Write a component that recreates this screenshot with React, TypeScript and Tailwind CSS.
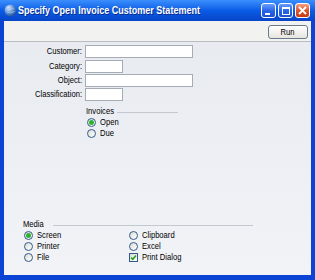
import React from 'react';

const FONT = { fontFamily: '"Liberation Sans", Arial, sans-serif' };

const Radio: React.FC<{ checked?: boolean }> = ({ checked }) => (
  <span className="relative inline-flex h-[9px] w-[9px] shrink-0 items-center justify-center rounded-full border border-[#33598c] bg-gradient-to-br from-[#dcdcd5] to-white">
    {checked && <span className="h-[5px] w-[5px] rounded-full bg-[#2bb52b]" />}
  </span>
);

const Check: React.FC<{ checked?: boolean }> = ({ checked }) => (
  <span className="inline-flex h-[9px] w-[9px] shrink-0 items-center justify-center border border-[#33598c] bg-gradient-to-br from-[#dcdcd5] to-white">
    {checked && (
      <svg width="7" height="7" viewBox="0 0 7 7">
        <path d="M1 3.5 L2.8 5.3 L6 1.5" stroke="#21a121" strokeWidth="1.5" fill="none" />
      </svg>
    )}
  </span>
);

const Option: React.FC<{ label: string; checked?: boolean; box?: boolean }> = ({ label, checked, box }) => (
  <div className="flex h-[11px] items-center gap-[4px]">
    {box ? <Check checked={checked} /> : <Radio checked={checked} />}
    <span className="origin-left scale-x-[0.82] whitespace-nowrap text-[9.3px] leading-[11px] text-black">{label}</span>
  </div>
);

const Field: React.FC<{ label: string; width: string; className?: string }> = ({ label, width, className }) => (
  <div className={`flex items-center ${className ?? ''}`}>
    <span className="w-[78px] origin-right scale-x-[0.82] whitespace-nowrap text-right text-[9.3px] leading-[13px] text-black">{label}</span>
    <div className={`ml-[3px] h-[13px] ${width} border border-[#a5acb5] bg-white`} />
  </div>
);

const TitleButton: React.FC<{ kind: 'min' | 'max' | 'close' }> = ({ kind }) => (
  <div
    className={`flex h-[15px] w-[15px] items-center justify-center rounded-[3px] border border-white ${
      kind === 'close'
        ? 'bg-gradient-to-b from-[#f0a080] via-[#e0552b] to-[#c63b14]'
        : 'bg-gradient-to-b from-[#6c9cfa] via-[#2a66ea] to-[#1d50d0]'
    }`}
  >
    {kind === 'min' && <span className="mt-[6px] ml-[-3px] h-[2px] w-[5px] bg-white" />}
    {kind === 'max' && <span className="h-[8px] w-[8px] border border-t-[2px] border-white" />}
    {kind === 'close' && (
      <svg width="9" height="9" viewBox="0 0 9 9">
        <path d="M1 1 L8 8 M8 1 L1 8" stroke="white" strokeWidth="1.8" />
      </svg>
    )}
  </div>
);

export default function App() {
  return (
    <div className="flex h-[280px] w-[315px] flex-col bg-[#0b44d4]" style={FONT}>
      {/* title bar */}
      <div className="flex h-[21px] shrink-0 items-center bg-gradient-to-b from-[#3c8ffc] via-[#0a5be6] to-[#0745c8] pl-[4px] pr-[5px]">
        <svg width="13" height="13" viewBox="0 0 13 13" className="shrink-0">
          <defs>
            <radialGradient id="g" cx="0.35" cy="0.3" r="0.8">
              <stop offset="0" stopColor="#e8f2ff" />
              <stop offset="0.5" stopColor="#5b8fd6" />
              <stop offset="1" stopColor="#1c3e86" />
            </radialGradient>
          </defs>
          <circle cx="6.5" cy="6.5" r="6" fill="url(#g)" />
          <path d="M3 5 Q6 3 10 5 M2.5 8 Q6.5 10 10.5 7.5" stroke="#9cc2f0" strokeWidth="0.8" fill="none" />
        </svg>
        <span className="ml-[1px] origin-left scale-x-[0.82] whitespace-nowrap text-[11px] font-bold text-white [text-shadow:1px_1px_0_#0a2a8a]">
          Specify Open Invoice Customer Statement
        </span>
        <div className="ml-auto flex shrink-0 gap-[2px]">
          <TitleButton kind="min" />
          <TitleButton kind="max" />
          <TitleButton kind="close" />
        </div>
      </div>

      <div className="mx-[4px] mb-[5px] flex flex-1 flex-col">
        {/* toolbar */}
        <div className="flex h-[21px] shrink-0 items-start justify-end border-b border-[#b9bcc2] bg-[#f2f2f0] pr-[3px] pt-[4px]">
          <button className="h-[14px] w-[40px] rounded-[3px] border border-[#6b7a8c] bg-gradient-to-b from-white to-[#e6e5de] text-[9.3px] leading-[12px] text-black">
            <span className="inline-block scale-x-[0.82]">Run</span>
          </button>
        </div>

        {/* content */}
        <div className="flex flex-1 flex-col bg-gradient-to-b from-[#e8ebf0] to-[#f1f3f7] pt-[3px]">
          <Field label="Customer:" width="w-[108px]" />
          <Field label="Category:" width="w-[38px]" className="mt-[2px]" />
          <Field label="Object:" width="w-[108px]" className="mt-[1px]" />
          <Field label="Classification:" width="w-[38px]" className="mt-[1px]" />

          <div className="ml-[82px] mt-[5px] w-[92px]">
            <div className="flex items-center">
              <span className="w-[26px] origin-left scale-x-[0.82] text-[9.3px] leading-[10px] text-black">Invoices</span>
              <span className="ml-[5px] mt-[2px] h-px flex-1 bg-[#c3c8d0]" />
            </div>
            <div className="ml-[1px] mt-[1px] flex flex-col">
              <Option label="Open" checked />
              <Option label="Due" />
            </div>
          </div>

          <div className="mt-auto mb-[12px] ml-[19px] w-[230px]">
            <div className="flex items-center">
              <span className="w-[24px] origin-left scale-x-[0.82] text-[9.3px] leading-[10px] text-black">Media</span>
              <span className="ml-[6px] mt-[2px] h-px flex-1 bg-[#c3c8d0]" />
            </div>
            <div className="ml-[1px] mt-[1px] flex">
              <div className="flex w-[105px] flex-col">
                <Option label="Screen" checked />
                <Option label="Printer" />
                <Option label="File" />
              </div>
              <div className="flex flex-col">
                <Option label="Clipboard" />
                <Option label="Excel" />
                <Option label="Print Dialog" box checked />
              </div>
            </div>
          </div>
        </div>
      </div>
    </div>
  );
}
